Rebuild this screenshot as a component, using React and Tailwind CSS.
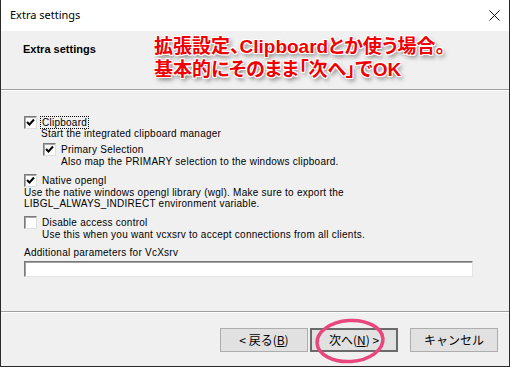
import React from "react";

function Check({ checked }) {
  return (
    <span className="w-[13px] h-[13px] shrink-0 bg-white border border-t-[#7a7a7a] border-l-[#7a7a7a] border-r-[#dedede] border-b-[#dedede] shadow-[inset_1px_1px_0_#a8a8a8] flex items-center justify-center">
      {checked && (
        <svg width="9" height="9" viewBox="0 0 9 9">
          <path d="M1 4 L3.5 6.5 L8 1.5" fill="none" stroke="#000" strokeWidth="2" />
        </svg>
      )}
    </span>
  );
}

function Button({ children, isDefault }) {
  return (
    <button
      className={
        isDefault
          ? "w-[88px] h-[24px] bg-[#e1e1e1] border-2 border-[#6a6a6a] text-[12px] text-black flex items-center justify-center"
          : "w-[88px] h-[24px] bg-[#e1e1e1] border border-[#adadad] text-[12px] text-black flex items-center justify-center"
      }
    >
      {children}
    </button>
  );
}

export default function App() {
  return (
    <div className="relative w-[510px] h-[367px] bg-[#f0f0f0] border-x border-b border-[#2b2b2b] flex flex-col overflow-hidden font-['Noto_Sans','Noto_Sans_CJK_JP',sans-serif] text-black">
      {/* title bar */}
      <div className="h-[31px] bg-white flex items-center justify-between pl-[9px] pr-[9px] shrink-0">
        <span className="text-[11px]">Extra settings</span>
        <svg width="11" height="11" viewBox="0 0 11 11">
          <path d="M0.5 0.5 L10.5 10.5 M10.5 0.5 L0.5 10.5" stroke="#111" strokeWidth="1" />
        </svg>
      </div>

      {/* header */}
      <div className="h-[59px] shrink-0 border-b border-[#a0a0a0] pl-[22px] pt-[10px]">
        <h1 className="text-[11px] leading-[16px] font-bold font-['Liberation_Sans',sans-serif]">Extra settings</h1>
      </div>

      {/* options */}
      <div className="h-[222px] shrink-0 border-t border-white border-b border-b-[#a0a0a0] pl-[23px] pt-[25px] font-['Liberation_Sans',sans-serif] text-[10px] tracking-[0.25px]">
        <div className="h-[12px] flex items-center gap-[4px]">
          <Check checked />
          <span className="outline-1 outline-dotted outline-black leading-[11px] px-[1px]">Clipboard</span>
        </div>
        <div className="leading-[12px] pl-[17px]">Start the integrated clipboard manager</div>
        <div className="mt-[3px] pl-[19px] h-[12px] flex items-center gap-[5px]">
          <Check checked />
          <span>Primary Selection</span>
        </div>
        <div className="mt-[1px] leading-[12px] pl-[37px]">Also map the PRIMARY selection to the windows clipboard.</div>

        <div className="mt-[6px] h-[12px] flex items-center gap-[5px]">
          <Check checked />
          <span>Native opengl</span>
        </div>
        <div className="leading-[11px] mt-[1px]">
          Use the native windows opengl library (wgl). Make sure to export the
          <br />
          LIBGL_ALWAYS_INDIRECT environment variable.
        </div>

        <div className="mt-[7px] h-[12px] flex items-center gap-[5px]">
          <Check />
          <span>Disable access control</span>
        </div>
        <div className="mt-[1px] leading-[12px] pl-[18px]">Use this when you want vcxsrv to accept connections from all clients.</div>

        <div className="mt-[6px] leading-[12px]">Additional parameters for VcXsrv</div>
        <div className="mt-[2px] w-[449px] h-[16px] bg-white border border-t-[#7a7a7a] border-l-[#7a7a7a] border-r-[#e3e3e3] border-b-[#e3e3e3] shadow-[inset_1px_1px_0_#a0a0a0]" />
      </div>

      {/* buttons */}
      <div className="h-[54px] shrink-0 border-t border-white flex justify-end items-start pt-[15px] pr-[11px] font-['Noto_Sans_CJK_JP',sans-serif]">
        <div className="flex gap-[2px]">
          <Button>
            &lt; 戻る(<span className="underline">B</span>)
          </Button>
          <Button isDefault>
            次へ(<span className="underline">N</span>) &gt;
          </Button>
        </div>
        <div className="ml-[12px]">
          <Button>キャンセル</Button>
        </div>
      </div>

      {/* annotation */}
      <div className="absolute left-[153px] top-[35px] text-[19px] leading-[23px] font-bold text-[#f00000] font-['Liberation_Sans','Noto_Sans_CJK_JP',sans-serif] [font-feature-settings:'palt'] [text-shadow:-1px_-1px_0_#fff,1px_-1px_0_#fff,-1px_1px_0_#fff,1px_1px_0_#fff,0_-1px_0_#fff,0_1px_0_#fff,2px_3px_4px_rgba(0,0,0,0.55)]">
        <div>拡張設定、Clipboardとか使う場合。</div>
        <div>基本的にそのまま「次へ」でOK</div>
      </div>

      <svg className="absolute left-[312px] top-[317px]" width="76" height="48" viewBox="0 0 76 48">
        <ellipse cx="37" cy="24" rx="33" ry="20.5" fill="none" stroke="#e8467c" strokeWidth="3.5" transform="rotate(-4 37 24)" />
      </svg>
    </div>
  );
}
